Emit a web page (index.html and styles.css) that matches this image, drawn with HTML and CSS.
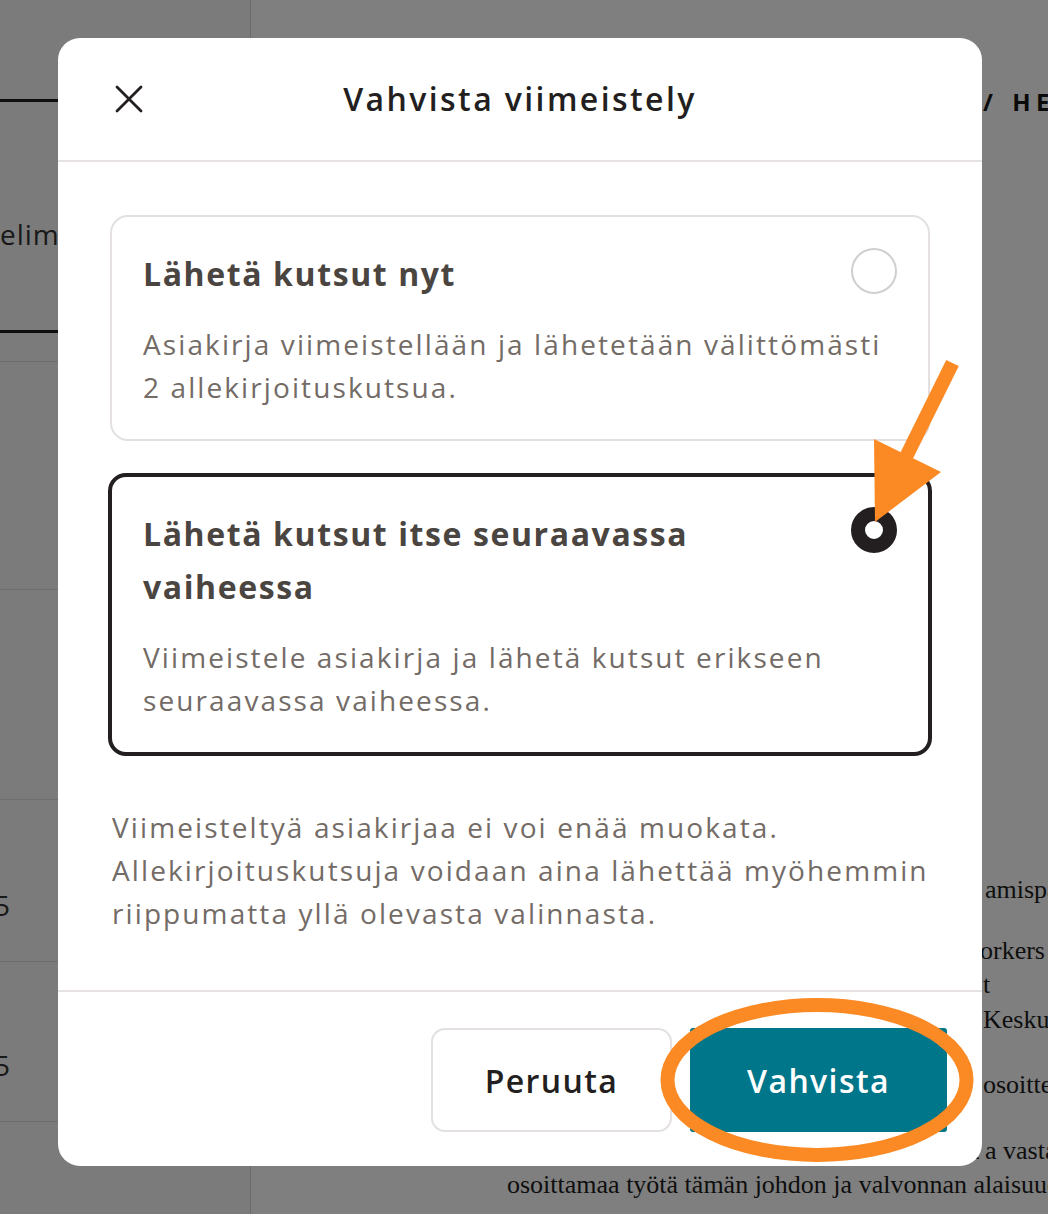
FILE: index.html
```html
<!DOCTYPE html>
<html lang="fi">
<head>
<meta charset="utf-8">
<title>Vahvista viimeistely</title>
<link rel="stylesheet" href="styles.css">
</head>
<body>
<div class="page">
  <aside class="sidebar">
    <div class="side-top"></div>
    <div class="side-tab"><span class="side-label">elimet</span></div>
    <div class="side-gap"></div>
    <div class="side-row side-row--a"></div>
    <div class="side-row side-row--b"></div>
    <div class="side-row side-row--c"><span class="side-num">25</span></div>
    <div class="side-row side-row--d"><span class="side-num side-num--low">25</span></div>
    <div class="side-row side-row--e"></div>
  </aside>
  <main class="doc-area">
    <div class="crumb"><span class="lead">TYÖSOPIMUS</span><span class="tail">/ HENKILÖSTÖ</span></div>
    <div class="doc">
      <p class="doc-par doc-par--first"><span class="doc-line"><span class="lead">Työsuhde alkaa sopimuksen allekirjoittamisen jälkeen ja aloitt</span><span class="tail tail--a">amispäivä on</span></span></p>
      <p class="doc-par">
        <span class="doc-line"><span class="lead">Työnantajana toimii Consulting W</span><span class="tail tail--o">orkers Oy</span></span>
        <span class="doc-line"><span class="lead">ja työntekijä sitoutuu noudattamaan sen ohjeita sekä Keskusliiton sopimukse</span><span class="tail">t</span></span>
        <span class="doc-line"><span class="lead">ja työehtosopimuksen määräyksiä, jotka on vahvistanut</span><span class="tail">Keskuskauppakamari</span></span>
      </p>
      <p class="doc-par"><span class="doc-line"><span class="lead">Työntekijän varsinainen työntekopaikka sijaitsee Helsingissä</span><span class="tail">osoitteessa</span></span></p>
      <p class="doc-par">
        <span class="doc-line"><span class="lead">Työntekijä tekee työnantajan lukuun ja vastuulla työtä j</span><span class="tail tail--a">a vastaa</span></span>
        <span class="doc-line">osoittamaa työtä tämän johdon ja valvonnan alaisuudessa.</span>
      </p>
    </div>
  </main>
</div>

<div class="overlay">
  <section class="modal" role="dialog" aria-labelledby="modal-title">
    <header class="modal-header">
      <button class="icon-btn" type="button" aria-label="Sulje">
        <svg width="28" height="28" viewBox="0 0 28 28" aria-hidden="true">
          <path d="M2 2 L26 26 M26 2 L2 26" stroke="#231f20" stroke-width="2.8" stroke-linecap="round" fill="none"/>
        </svg>
      </button>
      <h2 class="modal-title" id="modal-title">Vahvista viimeistely</h2>
      <span class="header-spacer"></span>
    </header>

    <div class="modal-body">
      <div class="options">
        <div class="option">
          <div class="option-head">
            <span class="option-title">Lähetä kutsut nyt</span>
            <span class="radio"></span>
          </div>
          <p class="option-desc">Asiakirja viimeistellään ja lähetetään välittömästi 2&nbsp;allekirjoituskutsua.</p>
        </div>
        <div class="option option--selected">
          <div class="option-head">
            <span class="option-title">Lähetä kutsut itse seuraavassa vaiheessa</span>
            <span class="radio radio--checked"></span>
          </div>
          <p class="option-desc">Viimeistele asiakirja ja lähetä kutsut erikseen seuraavassa vaiheessa.</p>
        </div>
      </div>
      <p class="note">Viimeisteltyä asiakirjaa ei voi enää muokata. Allekirjoituskutsuja voidaan aina lähettää myöhemmin riippumatta yllä olevasta valinnasta.</p>
    </div>

    <footer class="modal-footer">
      <button class="btn btn-secondary" type="button">Peruuta</button>
      <button class="btn btn-primary" type="button">Vahvista</button>
    </footer>
  </section>
</div>

<svg class="annotations" viewBox="0 0 1048 1214" width="1048" height="1214" aria-hidden="true">
  <line x1="952.5" y1="363" x2="906" y2="457" stroke="#fb8a24" stroke-width="14"/>
  <polygon points="874,439 941,472 875,522" fill="#fb8a24"/>
  <ellipse cx="817" cy="1080" rx="149.5" ry="75" fill="none" stroke="#fb8a24" stroke-width="14"/>
</svg>
</body>
</html>
```

FILE: styles.css
```css
* { box-sizing: border-box; }

html, body {
  margin: 0;
  padding: 0;
}

body {
  width: 1048px;
  height: 1214px;
  overflow: hidden;
  position: relative;
  background: #ffffff;
  font-family: "Open Sans", "DejaVu Sans", sans-serif;
}

/* ---------- background page ---------- */
.page {
  display: flex;
  height: 1214px;
}

.sidebar {
  width: 251px;
  flex: 0 0 251px;
  background: #f7f7f7;
  border-right: 1px solid #d6d6d6;
  display: flex;
  flex-direction: column;
  overflow: hidden;
}

.side-top {
  height: 102px;
  border-bottom: 3px solid #1e1e1e;
}

.side-tab {
  height: 231px;
  border-bottom: 3px solid #1e1e1e;
  padding-top: 112px;
}

.side-label {
  display: block;
  font-size: 28px;
  line-height: 40px;
  color: #333333;
  letter-spacing: 1px;
}

.side-gap {
  height: 29px;
  border-bottom: 1px solid #dcdcdc;
}

.side-row {
  border-bottom: 1px solid #dcdcdc;
}

.side-row--a { height: 228px; }
.side-row--b { height: 210px; }
.side-row--c { height: 162px; padding-top: 85px; }
.side-row--d { height: 160px; padding-top: 83px; }
.side-row--e { flex: 1; border-bottom: 0; }

.side-num {
  display: block;
  margin-left: -22px;
  font-size: 28px;
  line-height: 40px;
  color: #333333;
}

.doc-area {
  flex: 1;
  display: flex;
  flex-direction: column;
  padding-left: 256px;
  overflow: hidden;
  white-space: nowrap;
}

.lead {
  display: inline-block;
  width: 472px;
  overflow: hidden;
  vertical-align: top;
}

.tail {
  margin-left: 4px;
}

.crumb {
  padding-top: 86px;
  font-weight: 700;
  font-size: 24px;
  line-height: 32px;
  letter-spacing: 5.5px;
  word-spacing: 2px;
  color: #141414;
}

.doc {
  margin-top: 755px;
  font-family: "Liberation Serif", "Times New Roman", serif;
  font-size: 26px;
  line-height: 34.5px;
  color: #1c1c1c;
}

.doc-par {
  margin: 0 0 31px;
}

.doc-par--first {
  margin-bottom: 26px;
}

.doc-line {
  display: block;
}

.tail--a { margin-left: 6px; }
.tail--o { margin-left: 1px; }

/* ---------- overlay + modal ---------- */
.overlay {
  position: absolute;
  inset: 0;
  background: rgba(0, 0, 0, 0.5);
  display: flex;
  align-items: flex-start;
  padding: 38px 0 0 58px;
}

.annotations {
  position: absolute;
  top: 0;
  left: 0;
  pointer-events: none;
}

.modal {
  width: 924px;
  background: #ffffff;
  border-radius: 22px;
  display: flex;
  flex-direction: column;
  overflow: hidden;
  color: #231f20;
}

.modal-header {
  height: 124px;
  border-bottom: 2px solid #e7e3e3;
  display: grid;
  grid-template-columns: 1fr auto 1fr;
  align-items: center;
  padding: 0 56px 0 56px;
}

.icon-btn {
  justify-self: start;
  width: 30px;
  height: 30px;
  padding: 0;
  border: 0;
  background: transparent;
  display: flex;
  align-items: center;
  justify-content: center;
}

.modal-title {
  margin: 0;
  font-size: 32px;
  font-weight: 600;
  letter-spacing: 2.4px;
  line-height: 40px;
  color: #231f20;
}

.modal-body {
  padding: 53px 52px 55px;
  display: flex;
  flex-direction: column;
}

.options {
  display: flex;
  flex-direction: column;
  gap: 32px;
}

.option {
  border: 2px solid #e4e0e0;
  border-radius: 18px;
  padding: 30px 31px 30px 31px;
}

.option--selected {
  border: 4px solid #231f20;
  margin: 0 -2px;
}

.option-head {
  display: flex;
  align-items: flex-start;
  gap: 24px;
}

.option-title {
  flex: 1;
  font-size: 32px;
  font-weight: 700;
  line-height: 53px;
  letter-spacing: 1.6px;
  color: #4b4541;
}

.radio {
  flex: 0 0 46px;
  width: 46px;
  height: 46px;
  margin-top: 1px;
  border-radius: 50%;
  border: 2px solid #cfcfcf;
  background: #ffffff;
}

.radio--checked {
  border: 14px solid #231f20;
  margin-top: 0;
}

.option-desc {
  margin: 23px 0 0;
  max-width: 748px;
  font-size: 28px;
  line-height: 43px;
  letter-spacing: 2.1px;
  color: #736b66;
}

.note {
  margin: 50px -20px 0 2px;
  font-size: 28px;
  line-height: 43px;
  letter-spacing: 2.1px;
  color: #736b66;
}

.modal-footer {
  border-top: 2px solid #e7e3e3;
  padding: 36px 35px 34px;
  display: flex;
  justify-content: flex-end;
  align-items: center;
  gap: 18px;
}

.btn {
  height: 104px;
  font-family: "Open Sans", "DejaVu Sans", sans-serif;
  font-size: 32px;
  font-weight: 600;
  letter-spacing: 1.4px;
  display: flex;
  align-items: center;
  justify-content: center;
  padding: 0;
}

.btn-secondary {
  width: 241px;
  background: #ffffff;
  color: #231f20;
  border: 2px solid #e4e0e0;
  border-radius: 14px;
}

.btn-primary {
  width: 257px;
  background: #00768a;
  color: #ffffff;
  border: 0;
  border-radius: 3px;
}
```
